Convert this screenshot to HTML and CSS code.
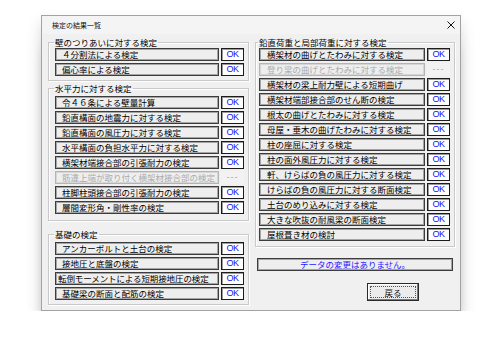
FILE: index.html
```html
<!DOCTYPE html>
<html lang="ja">
<head>
  <meta charset="UTF-8">
  <title>検定の結果一覧</title>
  <link rel="stylesheet" href="styles.css">
</head>
<body>

  <div class="dialog">
    <div class="titlebar">
      <span class="title">検定の結果一覧</span>
      <svg class="close" width="8" height="8" viewBox="0 0 8 8">
        <path d="M0.5 0.5 L7.5 7.5 M7.5 0.5 L0.5 7.5" stroke="#111" stroke-width="1" fill="none"/>
      </svg>
    </div>

    <div class="content">
      <div class="col col-left">
        <fieldset class="group g-wall">
          <legend>壁のつりあいに対する検定</legend>
          <div class="row"><div class="label">４分割法による検定</div><div class="ok">OK</div></div>
          <div class="row"><div class="label">偏心率による検定</div><div class="ok">OK</div></div>
        </fieldset>

        <fieldset class="group g-horiz">
          <legend>水平力に対する検定</legend>
          <div class="row"><div class="label">令４６条による壁量計算</div><div class="ok">OK</div></div>
          <div class="row"><div class="label">鉛直構面の地震力に対する検定</div><div class="ok">OK</div></div>
          <div class="row"><div class="label">鉛直構面の風圧力に対する検定</div><div class="ok">OK</div></div>
          <div class="row"><div class="label">水平構面の負担水平力に対する検定</div><div class="ok">OK</div></div>
          <div class="row"><div class="label">横架材端接合部の引張耐力の検定</div><div class="ok">OK</div></div>
          <div class="row off"><div class="label">筋違上端が取り付く横架材接合部の検定</div><div class="ok">---</div></div>
          <div class="row"><div class="label">柱脚柱頭接合部の引張耐力の検定</div><div class="ok">OK</div></div>
          <div class="row"><div class="label">層間変形角・剛性率の検定</div><div class="ok">OK</div></div>
        </fieldset>

        <fieldset class="group g-base">
          <legend>基礎の検定</legend>
          <div class="row"><div class="label">アンカーボルトと土台の検定</div><div class="ok">OK</div></div>
          <div class="row"><div class="label">接地圧と底盤の検定</div><div class="ok">OK</div></div>
          <div class="row"><div class="label tight">転倒モーメントによる短期接地圧の検定</div><div class="ok">OK</div></div>
          <div class="row"><div class="label">基礎梁の断面と配筋の検定</div><div class="ok">OK</div></div>
        </fieldset>
      </div>

      <div class="col col-right">
        <fieldset class="group g-vert">
          <legend>鉛直荷重と局部荷重に対する検定</legend>
          <div class="row"><div class="label">横架材の曲げとたわみに対する検定</div><div class="ok">OK</div></div>
          <div class="row off"><div class="label">登り梁の曲げとたわみに対する検定</div><div class="ok">---</div></div>
          <div class="row"><div class="label">横架材の梁上耐力壁による短期曲げ</div><div class="ok">OK</div></div>
          <div class="row"><div class="label">横架材端部接合部のせん断の検定</div><div class="ok">OK</div></div>
          <div class="row"><div class="label">根太の曲げとたわみに対する検定</div><div class="ok">OK</div></div>
          <div class="row"><div class="label">母屋・垂木の曲げたわみに対する検定</div><div class="ok">OK</div></div>
          <div class="row"><div class="label">柱の座屈に対する検定</div><div class="ok">OK</div></div>
          <div class="row"><div class="label">柱の面外風圧力に対する検定</div><div class="ok">OK</div></div>
          <div class="row"><div class="label">軒、けらばの負の風圧力に対する検定</div><div class="ok">OK</div></div>
          <div class="row"><div class="label">けらばの負の風圧力に対する断面検定</div><div class="ok">OK</div></div>
          <div class="row"><div class="label">土台のめり込みに対する検定</div><div class="ok">OK</div></div>
          <div class="row"><div class="label">大きな吹抜の耐風梁の断面検定</div><div class="ok">OK</div></div>
          <div class="row"><div class="label">屋根葺き材の検討</div><div class="ok">OK</div></div>
        </fieldset>

        <div class="status">データの変更はありません。</div>

        <div class="actions">
          <button class="btn-back"><span>戻る</span></button>
        </div>
      </div>
    </div>
  </div>

</body>
</html>
```

FILE: styles.css
```css
body {
  margin: 0;
  background-color: #ffffff;
  font-family: "Noto Sans CJK JP", "Noto Sans", sans-serif;
  color: #111;
}
.dialog {
  margin: 15px 0 0 41px;
  width: 420px;
  height: 296px;
  box-sizing: border-box;
  border: 1px solid #a3a3a3;
  background-color: #f0f0f0;
  box-shadow: 0 22px 16px -10px rgba(0, 0, 0, 0.55), 0 8px 14px rgba(0, 0, 0, 0.15);
}
.titlebar {
  height: 18px;
  display: flex;
  align-items: center;
  justify-content: space-between;
  padding: 0 5px 0 10px;
  background-color: #f4f4f4;
}
.title {
  font-size: 7px;
  line-height: 1;
}
.content {
  display: flex;
  gap: 6px;
  padding: 0 5px 0 6px;
}
.col {
  display: flex;
  flex-direction: column;
}
.col-left {
  width: 201px;
}
.col-right {
  width: 200px;
}
.group {
  margin: 3px 0 0 0;
  padding: 1px 4px 4px 6px;
  border: 1px solid #c9c9c9;
  box-shadow: 1px 1px 0 #ffffff, inset 1px 1px 0 #ffffff;
  display: flex;
  flex-direction: column;
  gap: 2px;
}
.group legend {
  font-size: 8.5px;
  line-height: 10px;
  padding: 0 1px;
  margin-left: -1px;
  color: #000;
}
.g-horiz {
  margin-top: 2px;
  padding-top: 3px;
  padding-bottom: 6px;
}
.g-base {
  margin-top: 8px;
  padding-top: 3px;
}
.g-vert {
  padding-left: 3px;
  padding-bottom: 5px;
}
.row {
  display: flex;
  gap: 2px;
  height: 13px;
}
.label {
  flex: 1;
  box-sizing: border-box;
  border: 1px solid #3c3c3c;
  box-shadow: inset 0 0 0 1px #a5a5a5;
  background-color: #eeeeee;
  color: #000;
  font-size: 8.5px;
  line-height: 11px;
  padding-left: 6px;
  white-space: nowrap;
  overflow: hidden;
}
.label.tight {
  padding-left: 2px;
  letter-spacing: -0.1px;
}
.g-vert .label {
  padding-left: 7px;
}
.ok {
  width: 23px;
  box-sizing: border-box;
  border: 1px solid #1c1c1c;
  box-shadow: inset 1px 1px 0 #9a9a9a;
  background-color: #ffffff;
  color: #1010ff;
  font-family: "Liberation Sans Narrow", "Liberation Sans", sans-serif;
  font-size: 9px;
  line-height: 11px;
  text-align: center;
  letter-spacing: -0.5px;
}
.off .label {
  color: #ababab;
  border-color: #b4b4b4;
  box-shadow: inset 0 0 0 1px #d6d6d6;
}
.off .ok {
  border-color: transparent;
  box-shadow: none;
  background-color: #f2f2f2;
  color: #a8a8a8;
  letter-spacing: 1px;
}
.status {
  margin: 11px 2px 0 2px;
  height: 13px;
  box-sizing: border-box;
  border: 1px solid #3c3c3c;
  box-shadow: inset 0 0 0 1px #a5a5a5;
  background-color: #eeeeee;
  color: #1a1aff;
  font-size: 8.5px;
  line-height: 11px;
  text-align: center;
}
.actions {
  display: flex;
  justify-content: flex-end;
  margin-top: 12px;
  padding-right: 36px;
}
.btn-back {
  width: 52px;
  height: 18px;
  padding: 2px;
  box-sizing: border-box;
  border: 1px solid #2a2a2a;
  box-shadow: inset -1px -1px 0 #7a7a7a, inset 1px 1px 0 #ffffff;
  background-color: #ececec;
  font-family: inherit;
  font-size: 8.5px;
  line-height: 1;
  color: #111;
}
.btn-back span {
  display: block;
  height: 100%;
  box-sizing: border-box;
  border: 1px dotted #555;
  line-height: 10px;
}
```
